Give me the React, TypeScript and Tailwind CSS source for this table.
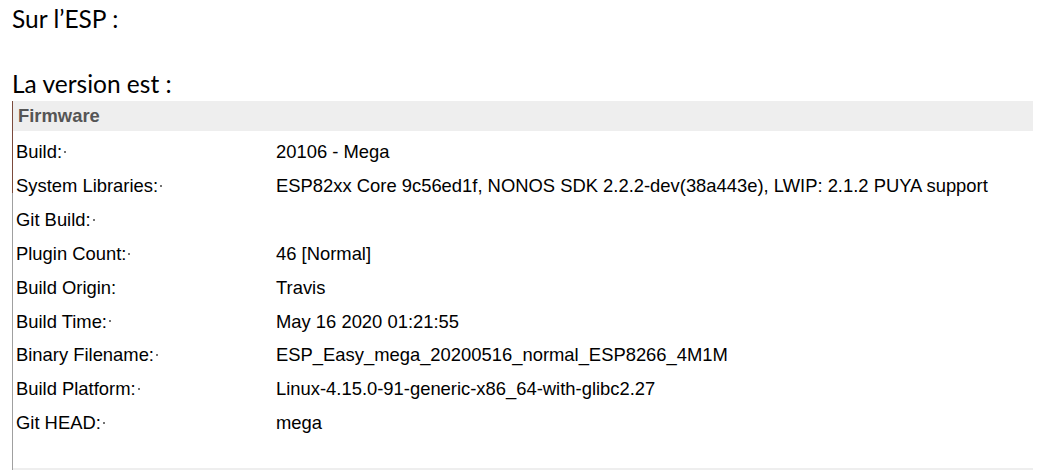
import React from "react";

const rows: [string, string, boolean][] = [
  ["Build:", "20106 - Mega", true],
  ["System Libraries:", "ESP82xx Core 9c56ed1f, NONOS SDK 2.2.2-dev(38a443e), LWIP: 2.1.2 PUYA support", true],
  ["Git Build:", "", true],
  ["Plugin Count:", "46 [Normal]", true],
  ["Build Origin:", "Travis", false],
  ["Build Time:", "May 16 2020 01:21:55", true],
  ["Binary Filename:", "ESP_Easy_mega_20200516_normal_ESP8266_4M1M", true],
  ["Build Platform:", "Linux-4.15.0-91-generic-x86_64-with-glibc2.27", true],
  ["Git HEAD:", "mega", true],
];

export default function App() {
  return (
    <div className="w-[1048px] h-[474px] bg-white overflow-hidden pl-[12px]">
      <div className="font-['Lato','Open_Sans',sans-serif] text-[24.5px] leading-[32px] text-black pt-[3px]">
        <div>Sur l’ESP :</div>
        <div className="mt-[33px]">La version est :</div>
      </div>
      <div className="flex mt-[1px] w-[1021px] font-['Liberation_Sans',Arial,sans-serif] text-[18.4px] text-black">
        <div className="flex flex-col w-px shrink-0">
          <div className="h-[92px] bg-[#7b4a3c]" />
          <div className="flex-1 bg-[#a0a0a0]" />
        </div>
        <div className="flex-1 flex flex-col">
          <div className="h-[30px] bg-[#eeeeee] flex items-center pl-[5px] font-bold text-[#555555]">Firmware</div>
          <div className="pt-[4px] pb-[28px]">
            {rows.map(([k, v, dot]) => (
              <div key={k} className="flex items-center h-[33.9px]">
                <div className="w-[263px] pl-[3px] flex items-center">
                  <span>{k}</span>
                  {dot && <span className="inline-block w-[2px] h-[2px] bg-[#444] rounded-full ml-[2px]" />}
                </div>
                <div>{v}</div>
              </div>
            ))}
          </div>
          <div className="h-[2px] bg-[#eeeeee]" />
        </div>
      </div>
    </div>
  );
}
